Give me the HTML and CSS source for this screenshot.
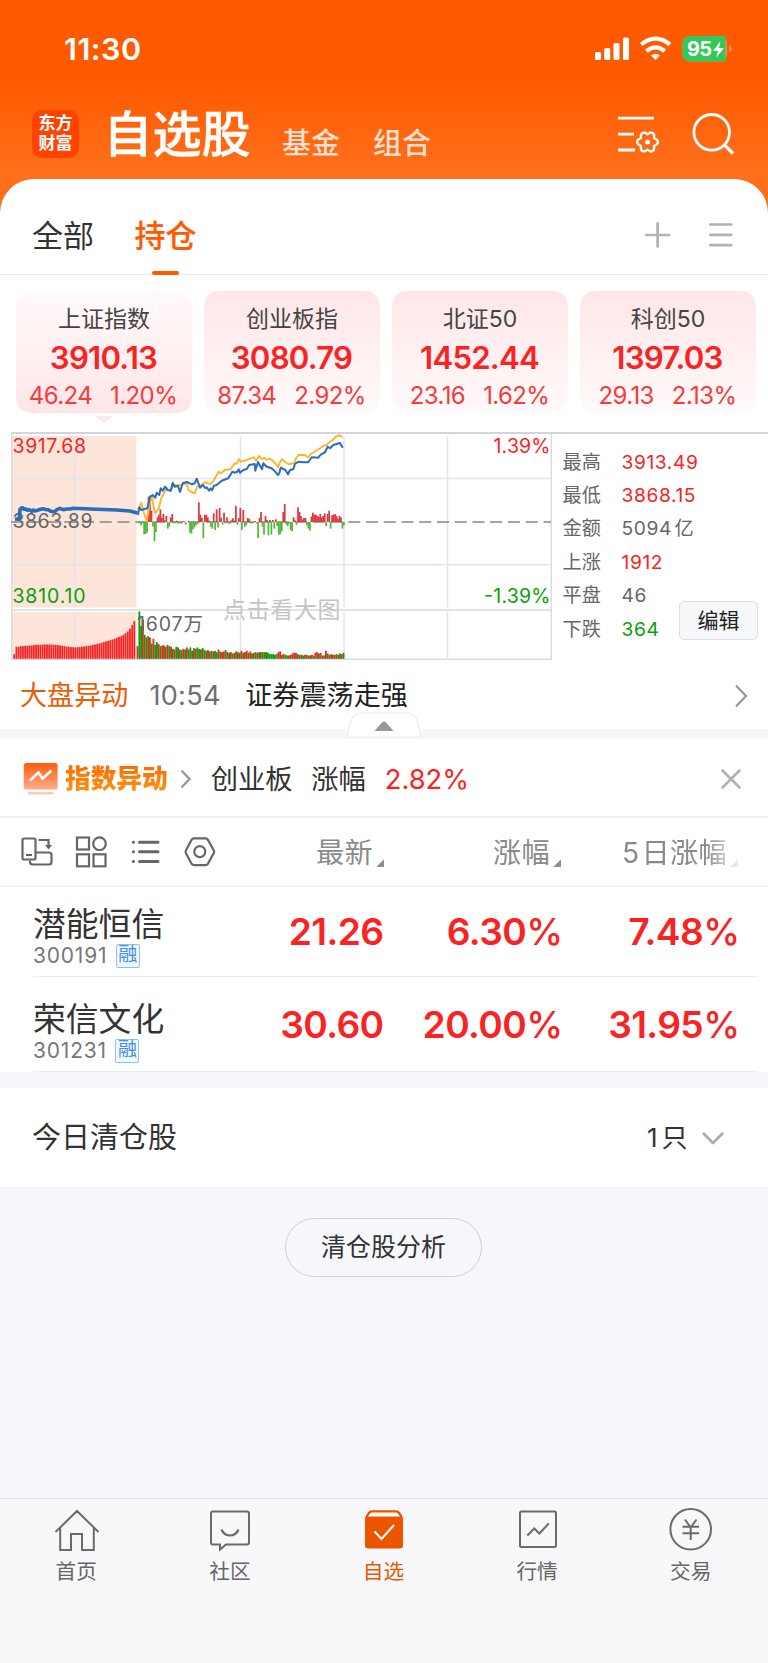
FILE: index.html
```html
<!DOCTYPE html>
<html lang="zh-CN">
<head>
<meta charset="utf-8">
<title>自选股</title>
<link rel="stylesheet" href="styles.css">
</head>
<body>
<div class="app">
  <header class="header">
    <div class="status">
      <span class="clock">11:30</span>
      <svg class="status-icons" width="141" height="28" viewBox="593 35 141 28">
        <g fill="#fff">
          <rect x="595" y="52" width="6" height="8" rx="1.6"/>
          <rect x="604.2" y="48" width="6" height="12" rx="1.6"/>
          <rect x="613.5" y="43" width="6" height="17" rx="1.6"/>
          <rect x="623" y="37.5" width="6" height="22.5" rx="1.6"/>
          <path d="M651 55.5Q655.5 51.800 660 55.500L655.500 60Z"/>
        </g>
        <g fill="none" stroke="#fff" stroke-width="4.200">
          <path d="M641.300 44.500Q655.500 32.800 669.900 44.500"/>
          <path d="M646.500 51.200Q655.500 43.600 664.700 51.200"/>
        </g>
        <rect x="682.500" y="36" width="44.500" height="25.500" rx="7" fill="#ff8a4d"/>
        <path d="M689.500 36H725.500V61.500H689.500A7 7 0 0 1 682.500 54.500V43A7 7 0 0 1 689.500 36Z" fill="#34c759"/>
        <path d="M729 45Q732 46.500 732 49T729 53Z" fill="#ff8a4d"/>
        <text x="687" y="56.300" class="battery-text" textLength="25">95</text>
        <path d="M720.500 41L713 51H718L716 58L724 48H719Z" fill="#fff"/>
      </svg>
    </div>
    <nav class="nav">
      <div class="logo"><span>东方</span><span>财富</span></div>
      <h1 class="title">自选股</h1>
      <span class="navlink">基金</span>
      <span class="navlink">组合</span>
      <svg class="nav-icons" width="120" height="44" viewBox="616 112 120 44" fill="none" stroke="#fff" stroke-width="2.800">
        <path d="M618 118.200H654M618 134.200H634M618 150H635"/>
        <path stroke-width="2.400" stroke-linejoin="round" d="M643.500 132.600Q645 132.200 647.500 134.300Q650 132.200 651.500 132.600L653.600 133.800Q654.400 134.800 654 138Q657.400 139.500 657.800 141V143Q657.400 144.500 654 146Q654.400 149.200 653.600 150.200L651.500 151.400Q650 151.800 647.500 149.700Q645 151.800 643.500 151.400L641.400 150.200Q640.600 149.200 641 146Q637.600 144.500 637.200 143V141Q637.600 139.500 641 138Q640.600 134.800 641.400 133.800Z"/>
        <circle cx="647.500" cy="142" r="2.500" fill="#fff" stroke="none"/>
        <circle cx="711.700" cy="132.300" r="17.800"/>
        <path d="M723.700 144.200L733 153.500" stroke-width="3.200"/>
      </svg>
    </nav>
  </header>

  <main class="sheet">
    <div class="tabs">
      <span class="tab">全部</span>
      <span class="tab tab-on">持仓</span>
      <svg class="tab-icons" width="90" height="28" viewBox="644 221 90 28" fill="none" stroke="#b2b2b2" stroke-width="2.700" stroke-linecap="round">
        <path d="M646.200 235H669M657.600 223.300V246.500"/>
        <path d="M710.300 224.500H731.300M710.300 234.800H731.300M710.300 245.200H731.300"/>
      </svg>
    </div>

    <section class="cards">
      <div class="card card-on"><div class="c-name">上证指数</div><div class="c-num">3910.13</div><div class="c-chg"><span>46.24</span><span>1.20%</span></div></div>
      <div class="card"><div class="c-name">创业板指</div><div class="c-num">3080.79</div><div class="c-chg"><span>87.34</span><span>2.92%</span></div></div>
      <div class="card"><div class="c-name">北证<i>50</i></div><div class="c-num">1452.44</div><div class="c-chg"><span>23.16</span><span>1.62%</span></div></div>
      <div class="card"><div class="c-name">科创<i>50</i></div><div class="c-num">1397.03</div><div class="c-chg"><span>29.13</span><span>2.13%</span></div></div>
    </section>

    <section class="market">
      <svg class="chart" width="541" height="228" viewBox="11 432 541 228">
        <path d="M12 436H136.500V607.500H12ZM12 612H136.500V658H12Z" fill="#fde5d9"/>
        <path d="M11 478.500H551M11 564.700H551M74.500 436V607.500M240.500 436V607.500M344 436V607.500M447.500 436V607.500M74.500 612V658M240.500 612V658M344 612V658M447.500 612V658" stroke="#e2e4ee" stroke-width="1.500" fill="none"/>
        <path d="M11.700 433V659.200H551.300V433M11 610H551.500" stroke="#d9dae3" stroke-width="1.400" fill="none"/>
        <path d="M11 522H551" stroke="#868686" stroke-width="1.600" stroke-dasharray="12 5.750"/>
        <text x="12.500" y="453" class="lbl red" textLength="73.500">3917.68</text>
        <text x="12.500" y="527.500" class="lbl gray" textLength="80">3863.89</text>
        <text x="12.500" y="602.500" class="lbl green" textLength="73">3810.10</text>
        <text x="493.500" y="453" class="lbl red" textLength="57">1.39%</text>
        <text x="484" y="602.500" class="lbl green" textLength="66.500">-1.39%</text>
        <text x="223" y="618" class="hint" textLength="117.500">点击看大图</text>
        <g id="delta"></g>
        <g id="volume"></g>
        <text x="137" y="631" class="lbl gray" textLength="66">1607万</text>
        <g id="lines" fill="none" stroke-linejoin="round"></g>
      </svg>
      <div class="stats">
        <div><b>最高</b><span class="red">3913.49</span></div>
        <div><b>最低</b><span class="red">3868.15</span></div>
        <div><b>金额</b><span>5094<em>亿</em></span></div>
        <div><b>上涨</b><span class="red">1912</span></div>
        <div><b>平盘</b><span>46</span></div>
        <div><b>下跌</b><span class="green">364</span></div>
        <button class="edit">编辑</button>
      </div>
    </section>

    <section class="news">
      <span class="news-tag">大盘异动</span>
      <span class="news-time">10:54</span>
      <span class="news-text">证券震荡走强</span>
      <svg class="push" width="14" height="24" viewBox="0 0 14 24" fill="none" stroke="#999" stroke-width="2.200"><path d="M2 1.500L12 12L2 22.500"/></svg>
      <svg class="handle" width="76" height="26" viewBox="346 712 76 26">
        <path d="M347 737.200L350 723Q353 713 362 713H407Q415 713 418 723L421.300 737.200Z" fill="#fff" stroke="#ececf0" stroke-width="1.200"/>
        <path d="M374.500 731L382 722.500Q384 720.300 386 722.500L393.500 731Z" fill="#999"/>
      </svg>
    </section>

    <section class="alert">
      <svg width="36" height="34" viewBox="23 761 36 34">
        <defs><linearGradient id="g" x2="0" y2="1"><stop stop-color="#ff5c0a"/><stop offset="1" stop-color="#ffad8c"/></linearGradient></defs>
        <rect x="23.800" y="762" width="33.800" height="26.500" rx="2.500" fill="url(#g)"/>
        <path d="M30 779.500L38.500 771.500L42.500 777.500L51.500 769.500" fill="none" stroke="#fff" stroke-width="2.600"/>
        <rect x="28" y="791" width="25.500" height="2.600" rx="1.300" fill="#ffc9b0"/>
      </svg>
      <span class="alert-tag">指数异动</span>
      <svg class="alert-arrow" width="12" height="20" viewBox="0 0 12 20" fill="none" stroke="#999" stroke-width="2.400"><path d="M1.500 1.500L9.500 10L1.500 18.500"/></svg>
      <span class="alert-name">创业板</span>
      <span class="alert-kind">涨幅</span>
      <span class="alert-val">2.82%</span>
      <svg class="push" width="20" height="20" viewBox="0 0 20 20" fill="none" stroke="#b0b0b0" stroke-width="2.500" stroke-linecap="round"><path d="M1.500 1.500L18.500 18.500M18.500 1.500L1.500 18.500"/></svg>
    </section>

    <section class="cols">
      <svg class="tools" width="195" height="34" viewBox="21 835 195 34" fill="none" stroke="#666" stroke-width="2.200">
        <rect x="22.500" y="838.500" width="13" height="21" rx="1.500"/>
        <path d="M26 855H32M30 860.500V862Q30 864.500 32.500 864.500H49Q51.500 864.500 51.500 862V855Q51.500 852.500 49 852.500H36M38.500 840H48.500V846"/>
        <path d="M45 845H52L48.500 849.500Z" fill="#666" stroke="none"/>
        <rect x="77" y="837.500" width="12" height="12"/><circle cx="99.500" cy="843.700" r="6.300"/><rect x="77" y="854.300" width="12" height="12"/><rect x="93.500" y="854.300" width="12" height="12"/>
        <path stroke-width="3" stroke-linecap="round" d="M139.500 842.200H158M139.500 851.800H158M139.500 861.500H158M133.300 842.200h.2M133.300 851.800h.2M133.300 861.500h.2"/>
        <path stroke-linejoin="round" d="M194 838.300H205.500Q207 838.300 207.800 839.600L213.700 850.200Q214.600 851.700 213.700 853.200L207.800 863.900Q207 865.200 205.500 865.200H194Q192.500 865.200 191.700 863.900L186 853.200Q185.200 851.700 186 850.200L191.700 839.600Q192.500 838.300 194 838.300Z"/><circle cx="199.800" cy="851.700" r="5.500"/>
      </svg>
      <div class="th">最新</div>
      <div class="th">涨幅</div>
      <div class="th th-fade"><i>5</i>日涨幅</div>
    </section>

    <section class="rows">
      <div class="row">
        <div class="stock"><div class="s-name">潜能恒信</div><div class="s-code">300191<span class="badge">融</span></div></div>
        <div class="val">21.26</div><div class="val">6.30<u>%</u></div><div class="val">7.48<u>%</u></div>
      </div>
      <div class="row">
        <div class="stock"><div class="s-name">荣信文化</div><div class="s-code">301231<span class="badge">融</span></div></div>
        <div class="val">30.60</div><div class="val">20.00<u>%</u></div><div class="val">31.95<u>%</u></div>
      </div>
    </section>

    <section class="cleared">
      <span>今日清仓股</span>
      <span class="count"><i>1</i>只</span>
      <svg class="down" width="22" height="14" viewBox="0 0 22 14" fill="none" stroke="#aaa" stroke-width="2.700" stroke-linecap="round" stroke-linejoin="round"><path d="M1.800 1.800L11 11L20.200 1.800"/></svg>
    </section>
  </main>

  <div class="filler"><button class="analyze">清仓股分析</button></div>

  <footer class="tabbar">
    <div class="item">
      <svg width="46" height="46" viewBox="0 0 46 46"><path d="M1.500 24L23 3L44.500 24M6.200 20V42H17V26H28V42H39.800V20"/></svg>
      <span>首页</span>
    </div>
    <div class="item">
      <svg width="46" height="46" viewBox="0 0 46 46"><path d="M6 3.500H40Q42 3.500 42 5.500V34.500Q42 36.500 40 36.500H19L13 41.500V36.500H6Q4 36.500 4 34.500V5.500Q4 3.500 6 3.500Z"/><path stroke-width="2.200" d="M14.500 21.500Q17 27.500 23 27.500T31.500 21.500"/></svg>
      <span>社区</span>
    </div>
    <div class="item item-on">
      <svg width="46" height="46" viewBox="0 0 46 46"><path class="solid" d="M11 2.200H35Q38 2.200 39.200 4.500L41.500 8.500Q42 9.500 42 11V37.500Q42 40.500 39 40.500H7Q4 40.500 4 37.500V11Q4 9.500 4.500 8.500L6.800 4.500Q8 2.200 11 2.200Z"/><path class="lid" d="M11 4.500H35Q37 4.500 39 8.500H7Q9 4.500 11 4.500Z"/><path class="check" d="M13.500 23.500L20.500 31L33 17"/></svg>
      <span>自选</span>
    </div>
    <div class="item">
      <svg width="46" height="46" viewBox="0 0 46 46"><rect x="5" y="3.500" width="36" height="35.500" rx="1.500"/><path d="M12.300 27.500L19.300 20.500L24.300 25.500L33.800 15.500"/></svg>
      <span>行情</span>
    </div>
    <div class="item">
      <svg width="46" height="46" viewBox="0 0 46 46"><circle cx="22.700" cy="21.300" r="20.300"/><path d="M17 11.500L22.700 19.500L28.500 11.500M14.500 18.800H31M14.500 25.300H31M22.700 19.500V32"/></svg>
      <span>交易</span>
    </div>
  </footer>
</div>
<script src="chart.js"></script>
</body>
</html>
```
FILE: styles.css
```css
* { box-sizing: border-box; }
body { margin: 0; background: #f6f7fb; font-family: Inter, "Noto Sans CJK SC", sans-serif; color: #333; }
i, em, u, b { font-style: normal; font-weight: inherit; text-decoration: none; }
button { font-family: inherit; padding: 0; color: inherit; }
svg { display: block; flex: none; }
.app { width: 768px; height: 1663px; display: flex; flex-direction: column; overflow: hidden; }
.red { color: #fa2323; fill: #fa2323; }
.green { color: #0a9f0a; fill: #0a9f0a; }
.push { margin-left: auto; }

.header { height: 240px; margin-bottom: -61px; flex: none; background: linear-gradient(#ff5a00 80px, #ff6f1a 170px); color: #fff; }
.status { height: 98px; padding: 0 34px 0 64px; display: flex; align-items: center; justify-content: space-between; }
.clock { font-size: 30.500px; font-weight: 600; letter-spacing: .5px; margin-top: -2px; }
.battery-text { font-size: 20px; font-weight: 700; fill: #fff; }
.nav { height: 72px; padding: 0 32px; display: flex; align-items: center; }
.logo { width: 47px; height: 48px; margin-top: -1px; border-radius: 10px; background: #ff4300; display: flex; flex-direction: column; align-items: center; justify-content: center; font-size: 17px; line-height: 19.500px; font-weight: 700; }
.title { margin: 1px 0 0 24.500px; width: 147px; font-size: 49px; line-height: 70px; font-weight: 500; -webkit-text-stroke: .5px #fff; }
.navlink { margin-left: 33px; padding-top: 20px; font-size: 29px; line-height: 36px; color: #ffdfcd; font-weight: 500; }
.navlink:nth-of-type(1) { margin-left: 31.500px; }
.nav-icons { margin-left: auto; }

.sheet { flex: none; background: #fff; border-radius: 34px 34px 0 0; }
.tabs { height: 96px; padding: 0 34px 0 32px; display: flex; align-items: center; border-bottom: 1.500px solid #ececef; }
.tab { font-size: 31px; line-height: 85px; height: 82px; margin-top: 14px; margin-bottom: -1px; display: flex; flex-direction: column; align-items: center; }
.tab-on { margin-left: 40.500px; color: #ff5a00; font-weight: 500; -webkit-text-stroke: .2px #ff5a00; }
.tab-on::after { content: ""; width: 27px; height: 4px; margin: -7px 0 0; border-radius: 2px; background: #ff5a00; flex: none; }
.tab-icons { margin-left: auto; margin-top: 16px; }

.cards { padding: 16px 12px 0 16px; display: grid; grid-template-columns: repeat(4, 176px); gap: 12px; }
.card { height: 121.500px; border-radius: 15px; background: linear-gradient(#ffe6e8, #fffafa); text-align: center; padding-top: 12px; }
.card-on { background: linear-gradient(#fffafa, #ffe6e8); }
.card-on::after { content: ""; display: block; width: 20px; height: 8px; margin: 6.500px auto 0; background: #ffe8e9; clip-path: polygon(0 0, 100% 0, 50% 100%); }
.c-name { font-size: 23px; line-height: 33px; height: 32px; color: #444; }
.c-num { font-size: 31.200px; line-height: 46px; font-weight: 600; color: #fa2323; letter-spacing: -.8px; margin-right: 1px; }
.c-chg { font-size: 24px; line-height: 26px; margin: 2px 1px 0 0; display: flex; justify-content: center; gap: 18px; color: #fa3a3a; letter-spacing: -.6px; height: 26px; }
.card-on .c-chg { margin-right: 2px; }

.market { margin: 19.500px 0 0 11px; border-top: 2px solid #d3d4dc; display: flex; height: 228px; }
.chart { margin-top: -2px; }
.lbl { font-size: 19.500px; }
.gray { fill: #666; }
.hint { font-size: 23px; fill: #c4c4c8; }
.stats { padding: 11.500px 0 0 10.500px; font-size: 19.200px; line-height: 33.400px; color: #666; flex: 1; position: relative; }
.stats div { display: flex; }
.stats b { width: 59px; }
.stats span { letter-spacing: .6px; }
.stats em { margin-left: 2.500px; }
.edit { position: absolute; right: 10px; top: 167px; width: 79px; height: 39px; border: 1.500px solid #dcdde6; border-radius: 5px; background: #f7f8fb; font-size: 21px; line-height: 34px; color: #222; }

.news { height: 79px; border-bottom: 10px solid #f6f7fb; padding: 2px 20px 0 20px; display: flex; align-items: center; font-size: 27.100px; line-height: 40px; position: relative; }
.news-tag { color: #ec5c05; }
.news-time { color: #707070; margin-left: 21px; letter-spacing: .3px; }
.news-text { color: #222; margin-left: 24.500px; }
.handle { position: absolute; left: 346px; top: 52px; }

.alert { height: 79px; border-bottom: 2px solid #f1f1f4; padding: 2px 27px 0 23px; display: flex; align-items: center; font-size: 27.300px; line-height: 40px; }
.alert-tag { margin-left: 6px; font-size: 25.700px; font-weight: 900; background: linear-gradient(#ff6200, #ff9c12); -webkit-background-clip: text; background-clip: text; color: transparent; }
.alert-arrow { margin-left: 12px; }
.alert-name { margin-left: 19px; padding-top: 2px; }
.alert-kind { margin-left: 18.500px; padding-top: 2px; }
.alert-val { margin-left: 19px; padding-top: 2px; color: #fa2323; letter-spacing: 0; }

.cols { height: 68.500px; border-bottom: 2px solid #f1f1f4; padding: 2px 0 0 21px; display: flex; align-items: center; font-size: 28.200px; line-height: 40px; color: #8a8a8a; }
.th { width: 177px; padding-top: 2px; display: flex; justify-content: flex-end; align-items: center; letter-spacing: .3px; }
.th:nth-of-type(1) { width: 168px; }
.th::after { content: ""; width: 8px; height: 8px; margin: 20px 0 0 3px; background: #8d8d95; clip-path: polygon(100% 0, 100% 100%, 0 100%); }
.th i { margin-right: 2px; }
.th-fade { -webkit-mask-image: linear-gradient(90deg, #000 82%, rgba(0,0,0,.2) 98%); mask-image: linear-gradient(90deg, #000 82%, rgba(0,0,0,.2) 98%); }

.rows { padding-left: 33px; padding-right: 10px; }
.row { height: 94.500px; border-bottom: 1.500px solid #ececef; display: flex; }
.row:first-child { height: 90.500px; }
.stock { width: 173.500px; padding-top: 17.500px; }
.row:first-child .stock { padding-top: 13.500px; }
.s-name { font-size: 32.800px; line-height: 48px; height: 44px; color: #333; }
.s-code { font-size: 21px; line-height: 24px; color: #777; display: flex; letter-spacing: .8px; }
.badge { width: 24px; height: 24px; margin-left: 8.500px; border: 1.500px solid #8fc0f5; border-radius: 2px; background: #f2f8ff; color: #3d8fe8; font-size: 19px; line-height: 20px; text-align: center; letter-spacing: 0; }
.val { width: 177px; text-align: right; font-size: 37.200px; font-weight: 600; line-height: 96.500px; color: #fa2323; letter-spacing: -.6px; }
.row:first-child .val { line-height: 89px; }
.val u { font-weight: 500; margin-right: -2px; }

.cleared { height: 115px; border-top: 16px solid #f6f7fb; padding: 1px 44px 0 32px; display: flex; align-items: center; font-size: 29px; line-height: 40px; }
.count { margin-left: auto; margin-right: 14.500px; font-size: 26px; }
.count i { margin-right: 4px; }
.down { margin-top: 3px; }
.filler { flex: 1; padding-top: 31px; display: flex; justify-content: center; align-items: flex-start; }
.analyze { width: 197px; height: 59.500px; margin-right: 1px; border: 1.500px solid #cfcfd3; border-radius: 30px; background: transparent; font-size: 25px; line-height: 56px; color: #333; }
.tabbar { flex: none; height: 165px; border-top: 1.500px solid #dedee2; background: #f8f8fb; display: flex; padding-top: 9px; }
.item { flex: 1; display: flex; flex-direction: column; align-items: center; color: #666; font-size: 20.700px; }
.item svg { fill: none; stroke: #6b6b6b; stroke-width: 2; }
.item span { line-height: 30px; margin: 2.500px 1px 0 0; }
.item-on { color: #ec5500; }
.item .solid { fill: #ec5500; stroke: none; }
.item .lid { fill: #fff; stroke: none; }
.item .check { stroke: #fff; }
```
FILE: chart.js
```js
// Points are stored in third-pixel units, relative to x = 0 and y = 420.
const NS = "http://www.w3.org/2000/svg";
const px = (x) => x / 3;
const py = (y) => 420 + y / 3;
function add(parent, tag, attrs) {
  const el = document.createElementNS(NS, tag);
  for (const k in attrs) el.setAttribute(k, attrs[k]);
  document.getElementById(parent).appendChild(el);
}
const toPoints = (s) => s.split(" ").map((p) => p.split(",").map(Number)).map(([x, y]) => px(x).toFixed(1) + "," + py(y).toFixed(1)).join(" ");

const average = "412,266 418,264 424,248 432,280 440,303 446,270 450,245 456,230 461,262 466,280 476,265 484,235 498,208 512,212 520,195 540,196 556,190 561,194 566,210 574,216 584,220 592,200 606,195 615,187 624,190 632,192 640,183 650,165 656,155 664,160 674,150 692,148 704,130 710,131 716,118 724,125 740,120 752,115 762,112 768,122 778,107 784,116 794,114 800,119 810,116 818,122 826,130 834,142 840,126 846,117 852,124 866,133 882,130 888,115 896,104 916,106 924,112 932,102 944,95 960,85 970,77 980,75 990,65 998,60 1008,50 1018,46 1028,52";
const price = "414,285 418,262 424,270 442,265 450,230 458,225 466,233 470,218 478,225 482,205 488,212 495,200 503,210 512,212 518,188 524,200 534,198 540,216 548,190 560,186 576,193 584,190 590,176 600,203 608,195 616,204 620,202 627,212 632,205 636,211 642,197 650,195 665,182 685,175 697,155 703,158 712,155 716,148 720,158 730,150 740,147 748,135 764,132 766,152 774,126 786,148 790,130 800,140 815,145 826,155 834,165 838,160 842,143 856,150 864,163 870,150 880,148 885,132 895,125 910,127 925,127 935,112 955,113 962,104 975,97 983,80 990,85 1000,75 1020,69 1028,83";
const auction = "45,298 58,296 60,268 64,264 68,263 72,268 78,267 82,271 88,269 95,274 100,270 105,273 115,270 122,268 130,266 137,269 145,269 152,274 160,275 166,274 170,269 180,265 190,269 200,267 210,267 220,265 290,268 350,270 390,273 412,279";
add("lines", "polyline", { points: toPoints(average), stroke: "#fdb52b", "stroke-width": 1.9 });
add("lines", "polyline", { points: toPoints(price), stroke: "#2a6cbd", "stroke-width": 2 });
add("lines", "polyline", { points: toPoints(auction), stroke: "#2a6cbd", "stroke-width": 3.6 });

// Buying and selling strength around the previous close.
const delta = [-3,-4,-10,-3,-36,-36,-32,76,60,34,-14,-58,-30,14,22,38,12,24,5,18,-20,-14,14,24,-4,-3,4,-5,-3,-5,3,2,-8,0,3,-32,-35,-22,-16,-10,-6,59,22,12,-48,22,22,14,4,-14,-20,26,-24,38,-16,42,12,-8,28,-4,14,-4,-5,5,11,4,48,-8,12,42,-24,36,-14,-10,12,9,-4,-4,-3,3,-4,-48,12,30,-14,-38,18,6,-40,6,-38,6,-20,8,-12,-38,-36,-28,30,54,-7,-12,-5,-24,-28,14,5,-8,44,30,18,8,12,12,-10,-20,-26,16,28,22,22,18,16,24,14,18,26,-12,24,34,-20,20,22,24,18,10,18,14,-20,-10];
delta.forEach((h, i) => {
  if (!h) return;
  add("delta", "rect", { x: px(412 + i * 4.44), y: h > 0 ? 522 - h / 3 : 522, width: 1.75, height: Math.abs(h) / 3, fill: h > 0 ? "#e0383e" : "#55b83c" });
});

// Volume: opening auction first, then one bar per minute of trading.
const before = [14,36,36,38,38,39,39,40,40,41,42,42,42,43,43,43,43,43,42,42,41,40,39,38,37,36,35,35,34,35,35,36,37,38,39,40,42,43,45,46,48,50,52,54,56,58,60,63,66,68,72,77,82,90,101,113];
before.forEach((h, i) => add("volume", "rect", { x: px(40 + i * 6.55), y: 658.8 - h / 3, width: 1.8, height: h / 3, fill: "#f82222" }));
const after = "R38 G142 G98 R118 G72 R64 G68 R64 G46 R60 G42 G50 R44 G38 R40 R40 G36 R42 G38 R36 G30 R28 G36 G34 R28 G26 R30 G28 R34 G28 G34 R24 G32 R30 G34 G30 R28 G32 G26 R24 G26 R22 G24 R22 G24 G20 R28 G22 R20 R22 G26 R20 G18 R20 G16 R18 G22 R20 G18 R24 G18 R20 R24 G18 R22 G16 R18 G20 R18 G20 G20 R20 G20 G20 G18 G14 G14 G14 G12 G14 R20 R22 G12 R14 G12 G10 R10 G12 R16 R18 R18 G14 G12 R12 G10 R12 G12 R10 G10 R12 G10 R18 R20 G16 R18 G10 R10 R24 G16 R12 G14 R12 R12 G14 R12 G16 R14 G18";
after.split(" ").forEach((s, i) => add("volume", "rect", { x: px(410 + i * 5.28), y: 658.8 - s.slice(1) / 3, width: 1.85, height: s.slice(1) / 3, fill: s[0] === "R" ? "#f82222" : "#0a9f0a" }));
```
